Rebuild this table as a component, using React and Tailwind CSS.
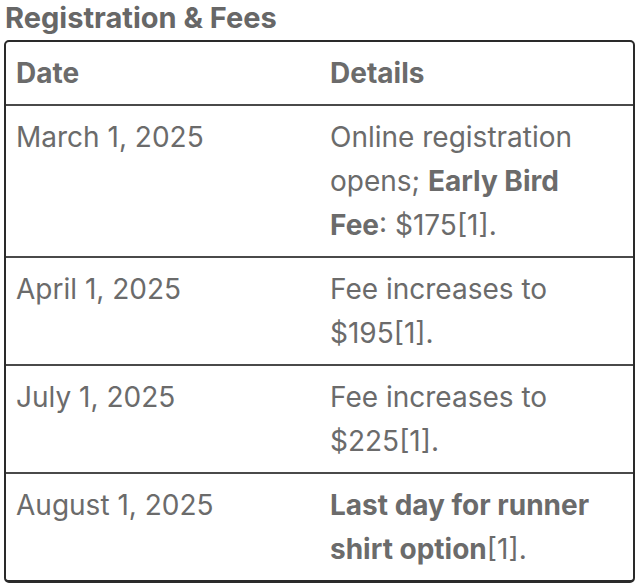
import React from 'react';

const rows = [
  {
    date: 'March 1, 2025',
    details: (
      <>
        Online registration opens; <b className="font-bold">Early Bird Fee</b>: $175[1].
      </>
    ),
  },
  { date: 'April 1, 2025', details: <>Fee increases to $195[1].</> },
  { date: 'July 1, 2025', details: <>Fee increases to $225[1].</> },
  {
    date: 'August 1, 2025',
    details: (
      <>
        <b className="font-bold">Last day for runner shirt option</b>[1].
      </>
    ),
  },
];

export default function App() {
  return (
    <div
      className="w-[640px] h-[588px] bg-white overflow-hidden text-[#6b6b6b]"
      style={{ fontFamily: 'Inter, "Noto Sans", sans-serif' }}
    >
      <h2 className="pl-[5px] pt-[1px] text-[29px] leading-[34px] font-bold text-[#676767]">
        Registration &amp; Fees
      </h2>
      <div className="ml-[4px] mt-[5px] w-[631px] border-2 border-[#2a2a2a] border-b-[3px] rounded-[5px] overflow-hidden">
        <table className="w-full border-collapse table-fixed">
          <colgroup>
            <col className="w-[314px]" />
            <col />
          </colgroup>
          <thead>
            <tr className="border-b-2 border-[#4a4a4a]">
              <th className="text-left font-bold px-[10px] py-[9px] text-[28px] leading-[44px]">Date</th>
              <th className="text-left font-bold px-[10px] py-[9px] text-[28px] leading-[44px]">Details</th>
            </tr>
          </thead>
          <tbody>
            {rows.map((r, i) => (
              <tr key={i} className={i < rows.length - 1 ? 'border-b-2 border-[#4a4a4a]' : ''}>
                <td className="align-top px-[10px] py-[9px] text-[28px] leading-[44px]">{r.date}</td>
                <td className="align-top pl-[10px] pr-[28px] py-[9px] text-[28px] leading-[44px]">{r.details}</td>
              </tr>
            ))}
          </tbody>
        </table>
      </div>
    </div>
  );
}
